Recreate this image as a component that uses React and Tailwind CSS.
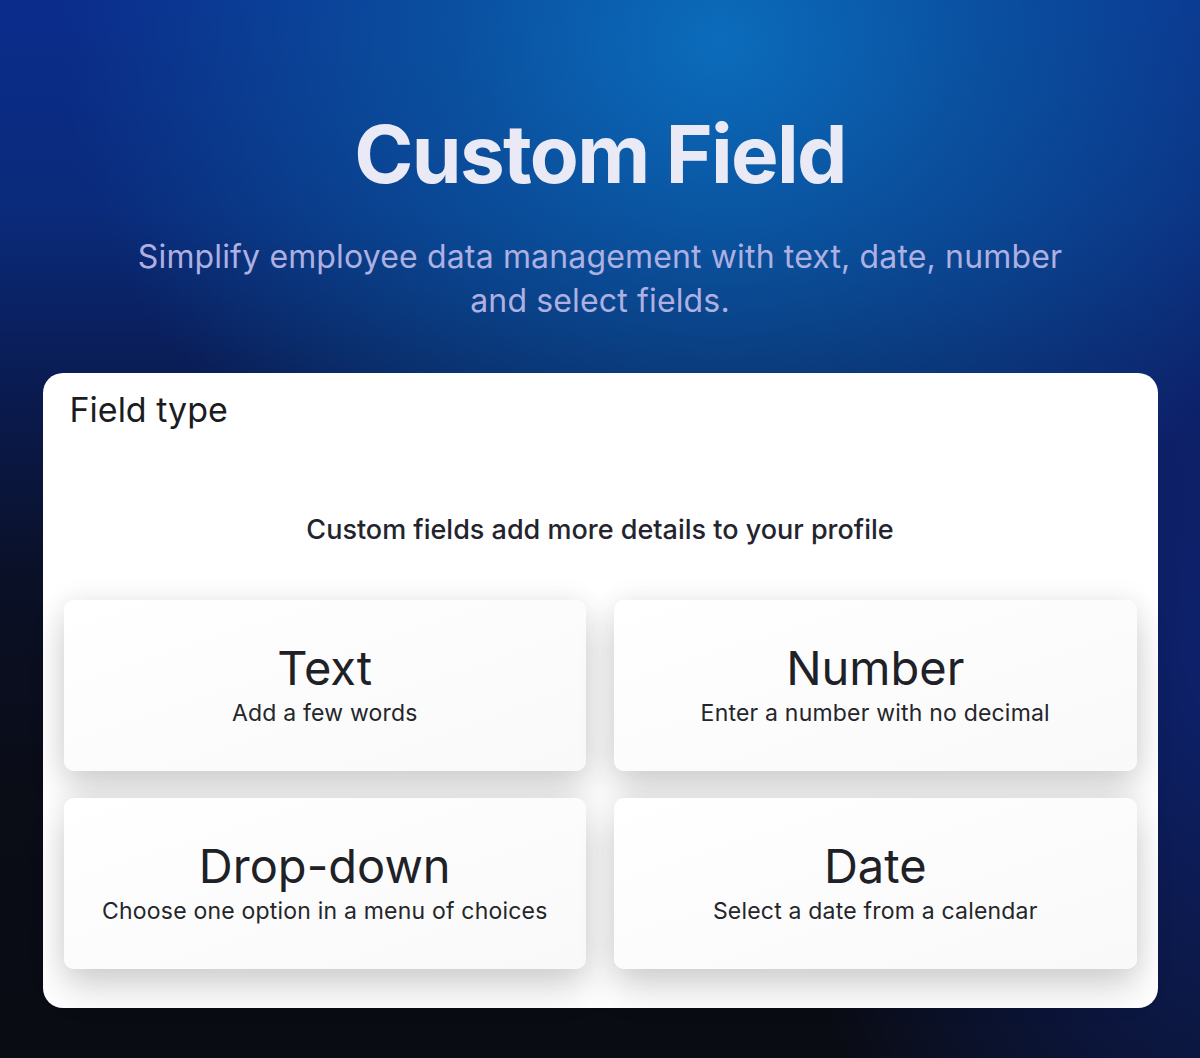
const fields = [
  { title: 'Text', desc: 'Add a few words' },
  { title: 'Number', desc: 'Enter a number with no decimal' },
  { title: 'Drop-down', desc: 'Choose one option in a menu of choices' },
  { title: 'Date', desc: 'Select a date from a calendar' },
];

function FieldTile({ title, desc }) {
  return (
    <div className="h-[171px] rounded-[10px] bg-gradient-to-br from-white to-[#f9f9f9] flex flex-col items-center justify-center shadow-[0_20px_36px_rgba(0,0,0,0.16),0_0_28px_rgba(0,0,0,0.08)]">
      <div className="text-[47px] leading-[50px] text-[#202126]">{title}</div>
      <div className="mt-[5px] text-[23px] leading-[30px] tracking-[0.2px] text-[#25262b]">{desc}</div>
    </div>
  );
}

export default function App() {
  return (
    <div
      className="min-h-[1058px] w-full overflow-hidden font-['Inter',sans-serif] bg-[radial-gradient(ellipse_55%_52%_at_60%_4%,rgba(11,112,190,0.95)_0%,rgba(10,95,170,0.7)_40%,rgba(10,70,150,0)_100%),radial-gradient(ellipse_40%_75%_at_104%_60%,rgba(14,36,120,0.95)_0%,rgba(14,36,120,0)_100%),linear-gradient(180deg,#0b2c8c_0%,#0a2a7a_20%,#0a1a4e_38%,#0a1026_55%,#0a0c16_75%,#0a0c14_100%)]"
    >
      {/* Hero */}
      <div className="flex flex-col items-center pt-[114px]">
        <h1 className="text-[80px] leading-none font-bold tracking-[-1.7px] text-[#eae9f6]">Custom Field</h1>
        <p className="mt-[41px] w-[950px] text-center text-[32px] leading-[44px] tracking-[0.15px] text-[#aeb0e2]">
          Simplify employee data management with text, date, number and select fields.
        </p>
      </div>

      {/* Card */}
      <div className="mx-auto mt-[50px] w-[1115px] rounded-[20px] bg-white px-[21px] pb-[39px] pt-[19px]">
        <div className="pl-[6px] text-[34px] leading-[36px] text-[#1c1c1f]">Field type</div>
        <div className="mt-[86px] text-center text-[27px] leading-[32px] font-medium text-[#23242e]">
          Custom fields add more details to your profile
        </div>
        <div className="mt-[54px] grid grid-cols-2 gap-x-[28px] gap-y-[27px]">
          {fields.map((f) => (
            <FieldTile key={f.title} title={f.title} desc={f.desc} />
          ))}
        </div>
      </div>
    </div>
  );
}
